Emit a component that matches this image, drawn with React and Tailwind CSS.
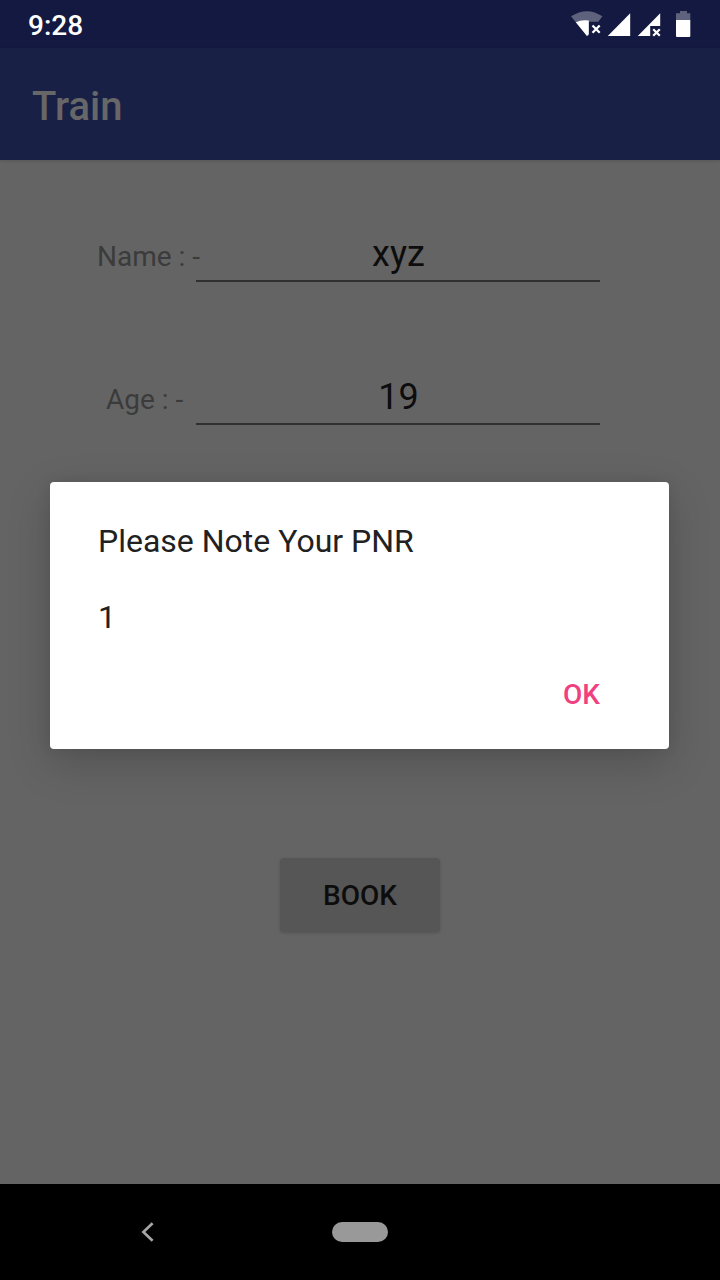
function StatusIcons() {
  return (
    <svg className="block h-12 w-[152px]" viewBox="568 0 152 48">
      <path d="M571 16.3Q587 6 602.4 16.3L598.2 21.7H588.5V35.2L587 36.2Z" fill="#fff" fillOpacity="0.32" />
      <path d="M575.8 22.2Q582 19.2 588.8 20.6V34.2L587 36Z" fill="#fff" />
      <path d="M592.5 25.5L599.7 32.7M599.7 25.5L592.5 32.7" stroke="#fff" strokeWidth="2.3" />
      <path d="M607.8 36L630.2 13.3V36Z" fill="#fff" />
      <path d="M637.8 36L660.2 13.3V26H650.2V36Z" fill="#fff" />
      <path d="M653.2 29.2L659.8 35.8M659.8 29.2L653.2 35.8" stroke="#fff" strokeWidth="2.2" />
      <path d="M680 11H687V13.3H690.3V20H676V13.3H680Z" fill="#fff" fillOpacity="0.32" />
      <path d="M676 20H690.3V36Q690.3 37 689.3 37H677Q676 37 676 36Z" fill="#fff" />
    </svg>
  );
}

function Field({ label, labelClass, value }) {
  return (
    <div className="flex h-[43px] items-start">
      <label className={labelClass}>{label}</label>
      <div className="flex h-[43px] w-[404px] shrink-0 justify-center border-b-2 border-[#303030] pl-px text-[36px] leading-[30px] text-[#0d0d0d]">
        {value}
      </div>
    </div>
  );
}

function Dialog() {
  return (
    <div className="absolute top-[482px] left-[50px] flex h-[267px] w-[619px] flex-col rounded-[4px] bg-white px-12 pt-10 text-[32px] leading-[38px] text-[#212121] shadow-[0_14px_44px_rgba(0,0,0,0.18),0_0_14px_rgba(0,0,0,0.08)]">
      <p className="whitespace-nowrap">Please Note Your PNR</p>
      <p className="mt-[38px]">1</p>
      <button className="mt-[42px] mr-[21px] self-end text-[28px] leading-[34px] font-medium text-[#f04080]">OK</button>
    </div>
  );
}

export default function App() {
  return (
    <div className="relative flex h-[1280px] w-[720px] flex-col overflow-hidden bg-[#646464] font-['Roboto',sans-serif]">
      <div className="flex h-12 shrink-0 items-center justify-between bg-[#131940] pl-7">
        <span className="pt-1 text-[28px] leading-8 font-medium text-white">9:28</span>
        <StatusIcons />
      </div>
      <header className="flex h-28 shrink-0 items-center bg-[#192046] px-8 pt-1.5 shadow-[0_1px_3px_rgba(0,0,0,0.15)]">
        <h1 className="text-[40px] leading-[48px] font-medium text-[#676767]">Train</h1>
      </header>
      <main className="flex flex-1 flex-col pt-[79px]">
        <Field
          label="Name : -"
          labelClass="w-[196px] pl-[97px] text-[28px] leading-[36px] whitespace-nowrap text-[#3b3b3b]"
          value="xyz"
        />
        <div className="h-[100px]" />
        <Field
          label="Age : -"
          labelClass="w-[196px] pl-[106px] text-[28px] leading-[36px] whitespace-nowrap text-[#3b3b3b]"
          value="19"
        />
        <button className="mt-[433px] ml-[280px] h-[74px] w-[160px] rounded-[4px] bg-[#565656] pt-0.5 text-[28px] leading-[34px] font-medium text-[#0d0d0d] shadow-[0_1px_3px_rgba(0,0,0,0.18)]">
          BOOK
        </button>
      </main>
      <nav className="flex h-24 shrink-0 items-center bg-black">
        <svg className="ml-[140px] h-6 w-4" viewBox="0 0 16 24" fill="none" stroke="#a5a5a5" strokeWidth="2.7">
          <path d="M12.6 3.2L3.4 12L12.6 20.8" />
        </svg>
        <div className="ml-[176px] h-5 w-14 rounded-full bg-[#999999]" />
      </nav>
      <Dialog />
    </div>
  );
}
